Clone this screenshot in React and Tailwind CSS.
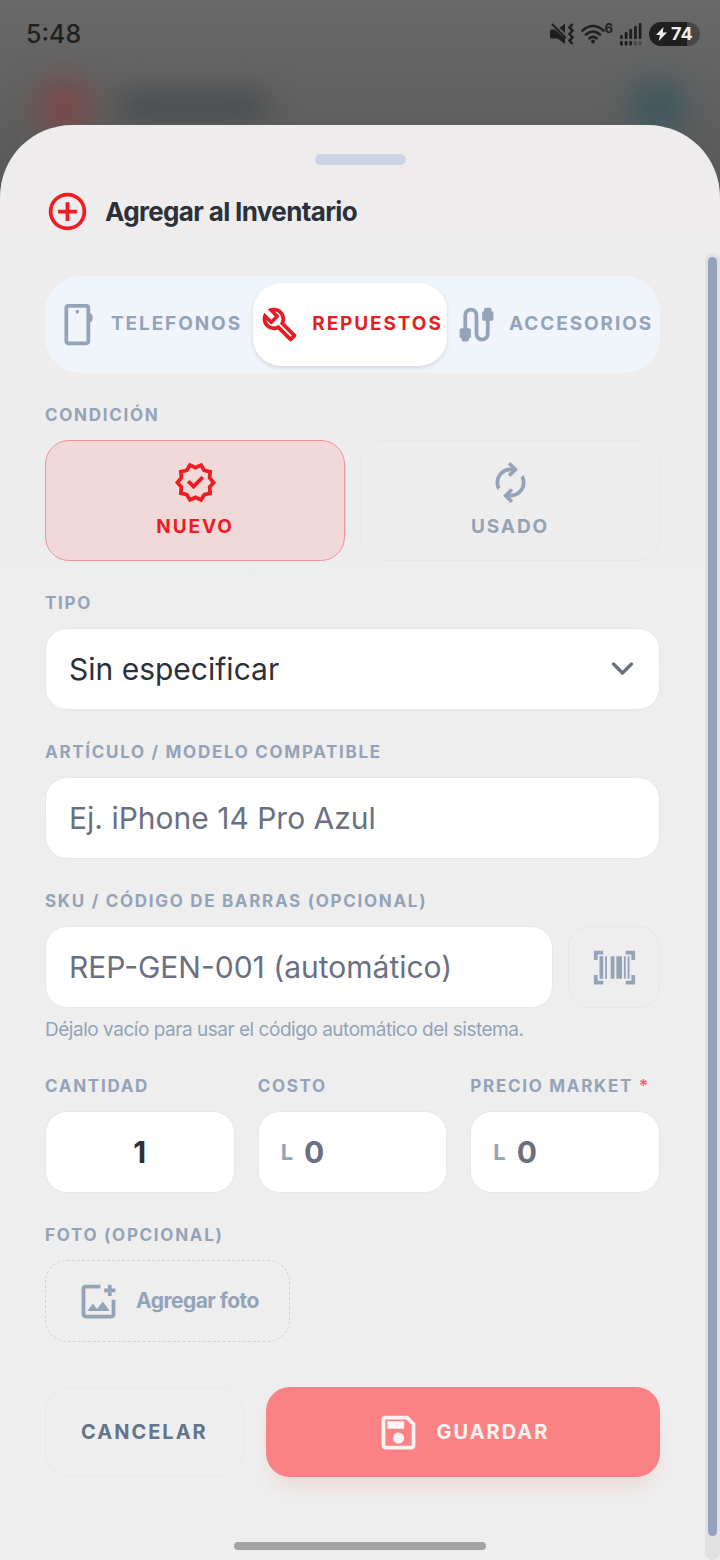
import React, { useState } from 'react';

const ICONS = {
  addCircle: 'M440-280h80v-160h160v-80H520v-160h-80v160H280v80h160v160Zm40 200q-83 0-156-31.5T197-197q-54-54-85.5-127T80-480q0-83 31.5-156T197-763q54-54 127-85.5T480-880q83 0 156 31.5T763-763q54 54 85.5 127T880-480q0 83-31.5 156T763-197q-54 54-127 85.5T480-80Zm0-80q134 0 227-93t93-227q0-134-93-227t-227-93q-134 0-227 93t-93 227q0 134 93 227t227 93Z',
  phone: 'M260-40q-33 0-56.5-23.5T180-120v-720q0-33 23.5-56.5T260-920h390q33 0 56.5 23.5T730-840v124q22 4 36 22t14 42v60q0 24-14 42t-36 22v408q0 33-23.5 56.5T650-40H260Zm0-80h390v-720H260v720ZM455-716q17 0 28.5-11.5T495-756q0-17-11.5-28.5T455-796q-17 0-28.5 11.5T415-756q0 17 11.5 28.5T455-716Z',
  build: 'M686-132 444-376q-20 8-40.5 12t-43.5 4q-100 0-170-70t-70-170q0-36 10-68.5t28-61.5l146 146 72-72-146-146q29-18 61.5-28t68.5-10q100 0 170 70t70 170q0 23-4 43.5T584-516l244 242q12 12 12 29t-12 29l-84 84q-12 12-29 12t-29-12Zm29-85 27-27-256-256q18-20 26-46.5t8-53.5q0-60-38.5-104.5T386-758l74 74q12 12 12 28t-12 28L332-500q-12 12-28 12t-28-12l-74-74q9 57 53.5 95.5T360-440q26 0 53-8t47-25l255 256Z',
  cable: 'M200-120q-17 0-28.5-11.5T160-160v-40h-40v-160q0-17 11.5-28.5T160-400h40v-280q0-66 47-113t113-47q66 0 113 47t47 113v400q0 33 23.5 56.5T600-200q33 0 56.5-23.5T680-280v-280h-40q-17 0-28.5-11.5T600-600v-160h40v-40q0-17 11.5-28.5T680-840h80q17 0 28.5 11.5T800-800v40h40v160q0 17-11.5 28.5T800-560h-40v280q0 66-47 113t-113 47q-66 0-113-47t-47-113v-400q0-33-23.5-56.5T360-760q-33 0-56.5 23.5T280-680v280h40q17 0 28.5 11.5T360-360v160h-40v40q0 17-11.5 28.5T280-120h-80Z',
  verified: 'm344-60-76-128-144-32 14-148-98-112 98-112-14-148 144-32 76-128 136 58 136-58 76 128 144 32-14 148 98 112-98 112 14 148-144 32-76 128-136-58-136 58Zm34-102 102-44 104 44 56-96 110-26-10-112 74-84-74-86 10-112-110-24-58-96-102 44-104-44-56 96-110 24 10 112-74 86 74 84-10 114 110 24 58 96Zm60-176 226-226-56-58-170 170-86-84-56 56 142 142Z',
  autorenew: 'M204-318q-22-38-33-78t-11-82q0-134 93-228t227-94h7l-64-64 56-56 160 160-160 160-56-56 64-64h-7q-100 0-170 70.5T240-478q0 26 6 51t18 49l-60 60ZM481-40 321-200l160-160 56 56-64 64h7q100 0 170-70.5T720-482q0-26-6-51t-18-49l60-60q22 38 33 78t11 82q0 134-93 228t-227 94h-7l64 64-56 56Z',
  barcode: 'M40-120v-200h80v120h120v80H40Zm680 0v-80h120v-120h80v200H720ZM160-240v-480h80v480h-80Zm120 0v-480h40v480h-40Zm120 0v-480h80v480h-80Zm120 0v-480h120v480H520Zm160 0v-480h40v480h-40Zm80 0v-480h40v480h-40ZM40-640v-200h200v80H120v120H40Zm800 0v-120H720v-80h200v200h-80Z',
  addPhoto: 'M200-120q-33 0-56.5-23.5T120-200v-560q0-33 23.5-56.5T200-840h320v80H200v560h560v-320h80v320q0 33-23.5 56.5T760-120H200Zm40-160h480L570-480 450-320l-90-120-120 160Zm440-320v-80h-80v-80h80v-80h80v80h80v80h-80v80h-80Z',
  save: 'M840-680v480q0 33-23.5 56.5T760-120H200q-33 0-56.5-23.5T120-200v-560q0-33 23.5-56.5T200-840h480l160 160Zm-80 34L646-760H200v560h560v-446ZM480-240q50 0 85-35t35-85q0-50-35-85t-85-35q-50 0-85 35t-35 85q0 50 35 85t85 35ZM240-560h360v-160H240v160Z',
};

const TABS = [
  { id: 'telefonos', label: 'Telefonos', icon: 'phone' },
  { id: 'repuestos', label: 'Repuestos', icon: 'build' },
  { id: 'accesorios', label: 'Accesorios', icon: 'cable' },
];

const CONDITIONS = [
  { id: 'nuevo', label: 'Nuevo', icon: 'verified' },
  { id: 'usado', label: 'Usado', icon: 'autorenew' },
];

const labelClass = 'block mb-[15px] text-[17px] leading-5 font-bold uppercase tracking-widest text-[#94a3b8] whitespace-nowrap';
const fieldClass = 'w-full min-w-0 h-[82px] px-[23px] rounded-[22px] bg-white border border-[#e5e7eb] text-[30px] text-[#2b303b] placeholder:text-[#6b7080] outline-none';

function Icon({ name }) {
  return (
    <svg viewBox="0 -960 960 960" fill="currentColor" className="w-[45px] h-[45px] shrink-0" aria-hidden="true">
      <path d={ICONS[name]} />
    </svg>
  );
}

function Field({ id, label, required, children }) {
  return (
    <div className="min-w-0">
      <label htmlFor={id} className={labelClass}>
        {label}
        {required && <span className="text-[#fb6472]"> *</span>}
      </label>
      {children}
    </div>
  );
}

function PriceInput({ id, value, onChange }) {
  return (
    <div className="flex items-center gap-[11px] h-[82px] px-[22px] rounded-[22px] bg-white border border-[#e5e7eb]">
      <span className="text-[22px] font-bold text-[#94a3b8]">L</span>
      <input
        id={id}
        inputMode="decimal"
        placeholder="0"
        value={value}
        onChange={(e) => onChange(e.target.value)}
        className="flex-1 min-w-0 h-full text-[30px] font-bold text-[#2b303b] placeholder:text-[#6b7080] outline-none"
      />
    </div>
  );
}

function StatusBar() {
  return (
    <div className="flex items-center justify-between h-[68px] pl-[26px] pr-5 text-[#1f1f1f]">
      <span className="text-[25px] leading-10 font-medium">5:48</span>
      <div className="flex items-center gap-[7px]">
        {/* Muted, vibrating */}
        <svg viewBox="0 0 24 22" className="w-6 h-[22px]" fill="currentColor" aria-hidden="true">
          <path d="M0 8Q0 6.5 1.5 6.5H5L15 15.5V21L7.5 15.5h-6Q0 15.5 0 14ZM9.5 5 15 .5v9.5Z" />
          <path d="m2 1 14 14" stroke="currentColor" strokeWidth="1.8" />
          <path d="m22.5 1-3 3.5 3 3-3 3.5 3 3.5-3 3 3 3.5" fill="none" stroke="currentColor" strokeWidth="2.5" />
        </svg>
        <div className="flex items-start">
          <svg viewBox="0 0 24 20" className="w-6 h-5" fill="none" stroke="currentColor" strokeWidth="2.6" strokeLinecap="round" aria-hidden="true">
            <path d="M1.5 6.5Q12-2.5 22.5 6.5M5 10.5q7-6 14 0M8.5 14.3q3.5-3 7 0" />
            <circle cx="12" cy="17.5" r="1.9" fill="currentColor" stroke="none" />
          </svg>
          <span className="text-[13px] leading-[8px] font-bold">6</span>
        </div>
        <svg viewBox="0 0 22 23" className="w-[22px] h-[23px]" fill="currentColor" aria-hidden="true">
          <rect x="0" y="12" width="2.8" height="4" rx="1" />
          <rect x="4.7" y="9" width="2.8" height="7" rx="1" />
          <rect x="9.3" y="6" width="2.8" height="10" rx="1" />
          <rect x="14" y="3" width="2.8" height="13" rx="1" />
          <rect x="18.7" y="0" width="2.8" height="16" rx="1" />
          <rect x="0" y="18" width="2.8" height="4.5" rx="1" />
          <rect x="4.7" y="18" width="2.8" height="4.5" rx="1" />
          <rect x="9.3" y="18" width="2.8" height="4.5" rx="1" />
          <rect x="14" y="18" width="2.8" height="4.5" rx="1" opacity="0.4" />
          <rect x="18.7" y="18" width="2.8" height="4.5" rx="1" opacity="0.4" />
        </svg>
        <div className="flex items-center gap-1 w-[51px] h-6 pl-[7px] rounded-full bg-linear-to-r from-[#1f1f1f] from-74% to-[#474747] to-74% text-[#eeeeee]">
          <svg viewBox="0 0 11 14" className="w-[11px] h-[14px]" fill="currentColor" aria-hidden="true">
            <path d="M7.5 0 0 8h4L2.8 14 11 5.5H6.8Z" />
          </svg>
          <span className="text-[18px] leading-6 font-bold">74</span>
        </div>
      </div>
    </div>
  );
}

export default function App() {
  const [tab, setTab] = useState('repuestos');
  const [condition, setCondition] = useState('nuevo');
  const [tipo, setTipo] = useState('');
  const [modelo, setModelo] = useState('');
  const [sku, setSku] = useState('');
  const [cantidad, setCantidad] = useState('1');
  const [costo, setCosto] = useState('');
  const [precio, setPrecio] = useState('');

  return (
    <div className="relative min-h-screen flex flex-col overflow-hidden bg-linear-to-b from-[#696969] to-[#585858] to-[200px] font-['Inter',sans-serif]">
      <StatusBar />

      {/* Page header behind the overlay */}
      <div className="flex items-center h-[57px] pl-[38px] pr-[36px] blur-[15px]" aria-hidden="true">
        <div className="w-[52px] h-[52px] mt-5 rounded-2xl bg-[#7a4848]" />
        <div className="w-[150px] h-[28px] mt-5 ml-7 rounded-full bg-[#46494c]" />
        <div className="w-[54px] h-[56px] mt-5 ml-auto rounded-full bg-[#3d585d]" />
      </div>

      {/* Bottom sheet */}
      <section aria-labelledby="sheet-title" className="relative flex-1 flex flex-col rounded-t-[72px] bg-linear-to-b from-[#eeecec] to-[#eeeeee] to-50%">
        <div className="self-center mt-[29px] w-[91px] h-[11px] rounded-full bg-[#cbd5e5]" />

        <div className="flex items-center gap-[15px] mt-6 px-[45px] text-[#f01c22]">
          <Icon name="addCircle" />
          <h1 id="sheet-title" className="text-[26px] leading-[45px] font-bold tracking-tight text-[#2b303b]">Agregar al Inventario</h1>
        </div>

        <div className="flex flex-1 mt-[19px]">
          <form className="flex-1 min-w-0 px-[45px] pt-[23px] pb-[83px]" onSubmit={(e) => e.preventDefault()}>
            <div className="flex gap-[7px] p-[7px] rounded-[36px] bg-[#f0f4fb]">
              {TABS.map((t) => (
                <button
                  key={t.id}
                  type="button"
                  onClick={() => setTab(t.id)}
                  className={`flex-1 flex items-center justify-center gap-[10px] h-[83px] rounded-[28px] text-[19px] font-bold uppercase tracking-widest ${
                    tab === t.id ? 'bg-white text-[#e51d24] shadow-[0_2px_4px_rgba(0,0,0,0.12)]' : 'text-[#94a3b8]'
                  }`}
                >
                  <Icon name={t.icon} />
                  {t.label}
                </button>
              ))}
            </div>

            <fieldset className="mt-8">
              <legend className={labelClass}>Condición</legend>
              <div className="grid grid-cols-2 gap-[15px]">
                {CONDITIONS.map((c) => (
                  <button
                    key={c.id}
                    type="button"
                    onClick={() => setCondition(c.id)}
                    className={`flex flex-col items-center justify-center gap-2 h-[121px] rounded-[24px] border text-[19px] leading-7 font-bold uppercase tracking-widest ${
                      condition === c.id ? 'bg-[#f1d8d9] border-[#f0929a] text-[#ee1c23]' : 'border-[#e6e8e9] text-[#94a3b8]'
                    }`}
                  >
                    <Icon name={c.icon} />
                    {c.label}
                  </button>
                ))}
              </div>
            </fieldset>

            <div className="mt-8 space-y-8">
              <Field id="tipo" label="Tipo">
                <div className="relative">
                  <select id="tipo" value={tipo} onChange={(e) => setTipo(e.target.value)} className={`${fieldClass} appearance-none`}>
                    <option value="">Sin especificar</option>
                    <option value="pantalla">Pantalla</option>
                    <option value="bateria">Batería</option>
                  </select>
                  <svg viewBox="0 0 20 20" className="absolute right-[15px] top-[18px] w-[45px] h-[45px] pointer-events-none text-[#6b7080]" fill="none" stroke="currentColor" strokeWidth="1.5" strokeLinecap="round" strokeLinejoin="round" aria-hidden="true">
                    <path d="m6 8 4 4 4-4" />
                  </svg>
                </div>
              </Field>

              <Field id="modelo" label="Artículo / Modelo compatible">
                <input id="modelo" placeholder="Ej. iPhone 14 Pro Azul" value={modelo} onChange={(e) => setModelo(e.target.value)} className={fieldClass} />
              </Field>

              <Field id="sku" label="SKU / Código de barras (opcional)">
                <div className="flex gap-[15px]">
                  <input id="sku" placeholder="REP-GEN-001 (automático)" value={sku} onChange={(e) => setSku(e.target.value)} className={fieldClass} />
                  <button type="button" aria-label="Escanear código" className="flex items-center justify-center shrink-0 w-[92px] h-[82px] rounded-[22px] border border-[#e5e7e8] text-[#94a3b8]">
                    <Icon name="barcode" />
                  </button>
                </div>
                <p className="mt-2 text-[19px] leading-7 tracking-tight text-[#94a3b8]">Déjalo vacío para usar el código automático del sistema.</p>
              </Field>

              <div className="grid grid-cols-3 gap-[23px]">
                <Field id="cantidad" label="Cantidad">
                  <input id="cantidad" inputMode="numeric" value={cantidad} onChange={(e) => setCantidad(e.target.value)} className={`${fieldClass} font-bold text-center`} />
                </Field>
                <Field id="costo" label="Costo">
                  <PriceInput id="costo" value={costo} onChange={setCosto} />
                </Field>
                <Field id="precio" label="Precio Market" required>
                  <PriceInput id="precio" value={precio} onChange={setPrecio} />
                </Field>
              </div>

              <div>
                <span id="foto-label" className={labelClass}>Foto (opcional)</span>
                <button type="button" aria-describedby="foto-label" className="flex items-center gap-[15px] h-[82px] px-[30px] rounded-[22px] border border-dashed border-[#cbd2da] text-[21px] font-bold tracking-tight text-[#94a3b8]">
                  <Icon name="addPhoto" />
                  Agregar foto
                </button>
              </div>
            </div>

            <div className="flex gap-[22px] mt-[45px]">
              <button type="button" className="h-[90px] px-[35px] rounded-[24px] border border-[#e7e9ea] text-[20px] font-bold uppercase tracking-widest text-[#64748b]">
                Cancelar
              </button>
              <button type="submit" className="flex-1 flex items-center justify-center gap-[15px] h-[90px] rounded-[24px] bg-[#fb8284] text-[20px] font-bold uppercase tracking-widest text-[#fdf3f3] shadow-[0_14px_20px_-6px_rgba(250,130,132,0.22)]">
                <Icon name="save" />
                Guardar
              </button>
            </div>
          </form>

          {/* Scrollbar */}
          <div className="flex flex-col w-[15px] px-[3px] pt-1 pb-6 rounded-full bg-[#e0e2e3]" aria-hidden="true">
            <div className="flex-1 rounded-full bg-[#94a3bd]" />
          </div>
        </div>
      </section>

      {/* Gesture bar */}
      <div className="absolute bottom-[10px] left-1/2 -translate-x-1/2 w-[252px] h-2 rounded-full bg-[#a3a4a3]" />
    </div>
  );
}
